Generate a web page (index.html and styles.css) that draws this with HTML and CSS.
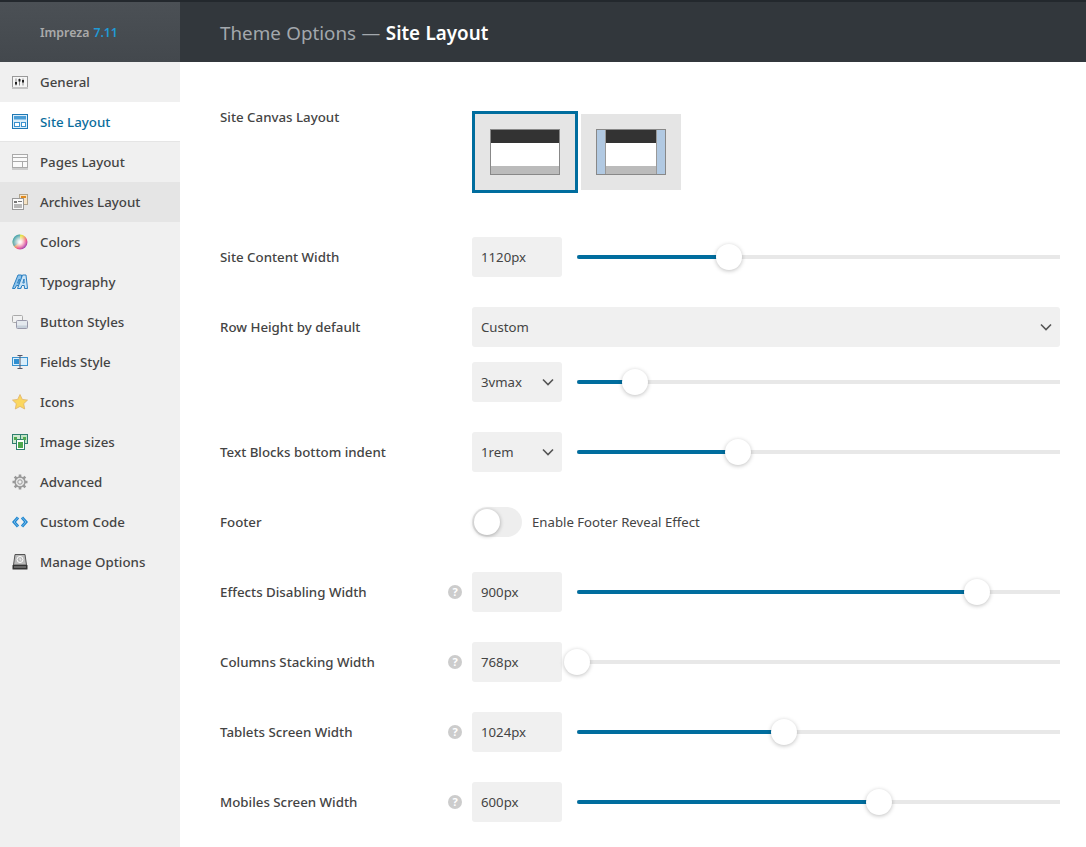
FILE: index.html
```html
<!DOCTYPE html>
<html lang="en">
<head>
<meta charset="utf-8">
<title>Theme Options — Site Layout</title>
<link rel="stylesheet" href="styles.css">
</head>
<body>
<div class="app">
  <aside class="sidebar">
    <div class="brand">Impreza <span class="brand-version">7.11</span></div>
    <nav class="menu">
      <a class="menu-item"><svg class="menu-icon" viewBox="0 0 16 16"><rect x="0.500" y="2.500" width="15" height="11" fill="#f6f6f6" stroke="#999"/><rect x="0" y="13" width="16" height="2" fill="#c4c4c4"/><path d="M4 4.500v7M7.500 4.500v7M11 4.500v7" stroke="#888"/><path d="M3 8h2v2.500H3zM6.500 5h2v2.500h-2zM10 6h2v2.500h-2z" fill="#222"/></svg>General</a>
      <a class="menu-item is-active"><svg class="menu-icon" viewBox="0 0 16 16"><rect x="0.500" y="0.500" width="15" height="14" fill="#dcedf9" stroke="#1f78b4"/><rect x="2" y="2" width="12" height="3.500" fill="#4a9dd6"/><rect x="2.500" y="8.500" width="5" height="4" fill="#fff" stroke="#3b93cf"/><rect x="9.500" y="8.500" width="4" height="4" fill="#fff" stroke="#3b93cf"/></svg>Site Layout</a>
      <a class="menu-item"><svg class="menu-icon" viewBox="0 0 16 16"><rect x="0.500" y="0.500" width="15" height="13" fill="#fafafa" stroke="#aaa"/><path d="M1 3.500h14M1 7.500h14M10.500 7.500v6" stroke="#aaa"/><rect x="0" y="14" width="16" height="2" fill="#ccc"/></svg>Pages Layout</a>
      <a class="menu-item is-hover"><svg class="menu-icon" viewBox="0 0 16 16"><rect x="7.500" y="0.500" width="8" height="10" fill="#f6e3c5" stroke="#b0a48c"/><path d="M9 3h5" stroke="#e08a1e" stroke-width="2"/><rect x="0.500" y="4.500" width="11" height="11" fill="#fafafa" stroke="#999"/><path d="M2 7h3v2H2z" fill="#777"/><path d="M6 7.500h4M2 11h8M2 13h8" stroke="#777"/></svg>Archives Layout</a>
      <a class="menu-item"><svg class="menu-icon" viewBox="0 0 16 16"><defs><linearGradient id="wheel" x1="0" y1="0" x2="1" y2="1"><stop offset="0" stop-color="#33c06a"/><stop offset="0.350" stop-color="#e8e640"/><stop offset="0.650" stop-color="#f0508a"/><stop offset="1" stop-color="#6a3fd8"/></linearGradient><radialGradient id="wheel-core"><stop offset="0" stop-color="#fff"/><stop offset="0.250" stop-color="#fff" stop-opacity="0.850"/><stop offset="1" stop-color="#fff" stop-opacity="0"/></radialGradient></defs><circle cx="8" cy="8" r="7.500" fill="url(#wheel)"/><path d="M8 0.500A7.500 7.500 0 0 0 2 12.500L8 8z" fill="#2b8fe0" opacity="0.650"/><circle cx="8" cy="8" r="7" fill="url(#wheel-core)"/></svg>Colors</a>
      <a class="menu-item"><svg class="menu-icon" viewBox="0 0 16 16"><path d="M0.500 14.500 6 1h3.500l-.500 13.500H6.500l.2-3H4.500l-1.500 3zM5.500 9h1.500l.3-4z" fill="#8fc4ec" stroke="#2a7fc0"/><path d="M5.500 14.500 10.500 1H14l1.500 13.500H12.500l-.2-3H10l-1.500 3zM10.800 9h1.400l-.2-4z" fill="#cbe4f7" stroke="#2a7fc0"/></svg>Typography</a>
      <a class="menu-item"><svg class="menu-icon" viewBox="0 0 16 16"><rect x="0.500" y="1.500" width="10" height="7" rx="1" fill="#f2f2f2" stroke="#aaa"/><rect x="4.500" y="6.500" width="11" height="8" rx="1" fill="#e4e9ee" stroke="#99a"/><rect x="5" y="11.500" width="10" height="2.500" fill="#c6d0da"/></svg>Button Styles</a>
      <a class="menu-item"><svg class="menu-icon" viewBox="0 0 16 16"><rect x="0.500" y="3.500" width="15" height="8" fill="#d9eefb" stroke="#3b93cf"/><rect x="2" y="5" width="5" height="5" fill="#2f8fd0"/><path d="M5.500 1.500h5M8 1.500v13M5.500 14.500h5" stroke="#556" fill="none"/></svg>Fields Style</a>
      <a class="menu-item"><svg class="menu-icon" viewBox="0 0 16 16"><path d="M8 0.500l2.300 4.900 5.200.700-3.800 3.600 1 5.300L8 12.400 3.300 15l1-5.300L.5 6.100l5.200-.7z" fill="#fbd75f" stroke="#dfb36a" stroke-width="0.800"/></svg>Icons</a>
      <a class="menu-item"><svg class="menu-icon" viewBox="0 0 16 16"><rect x="0.500" y="0.500" width="9" height="9" fill="#cfe9d2" stroke="#2f7f6f"/><rect x="8.500" y="0.500" width="7" height="9" fill="#bfe3c4" stroke="#2f7f6f"/><rect x="4.500" y="5.500" width="8" height="10" fill="#fff" stroke="#2f7f6f"/><path d="M6 8h5v6H6z" fill="#4da84f"/><path d="M2 3h3v3H2zM11 3h3v3h-3z" fill="#4da84f"/></svg>Image sizes</a>
      <a class="menu-item"><svg class="menu-icon" viewBox="0 0 16 16"><circle cx="8" cy="8" r="5" fill="#e4e4e4" stroke="#999" stroke-width="1.400"/><path d="M8 .5v3M8 12.500v3M.5 8h3M12.500 8h3M2.700 2.700l2.100 2.100M11.200 11.200l2.100 2.100M13.300 2.700l-2.100 2.100M4.800 11.200l-2.100 2.100" stroke="#999" stroke-width="2.600"/><circle cx="8" cy="8" r="2.200" fill="#f0f0f0" stroke="#999"/></svg>Advanced</a>
      <a class="menu-item"><svg class="menu-icon" viewBox="0 0 16 16"><path d="M6 3.500 2 8l4 4.500M10 3.500 14 8l-4 4.500" fill="none" stroke="#1f86cf" stroke-width="3"/><path d="M6 3.500 2 8l4 4.500M10 3.500 14 8l-4 4.500" fill="none" stroke="#8cc8f0" stroke-width="0.800"/></svg>Custom Code</a>
      <a class="menu-item"><svg class="menu-icon" viewBox="0 0 16 16"><path d="M3 .5h10l1.500 10.500h-13z" fill="#b9b9b9" stroke="#555"/><circle cx="8" cy="5.500" r="3" fill="none" stroke="#fff"/><path d="M8 4v2h1.500" fill="none" stroke="#fff" stroke-width="0.800"/><rect x="0.500" y="11" width="15" height="4.500" rx="0.500" fill="#333"/><rect x="2" y="12.500" width="12" height="1" fill="#999"/></svg>Manage Options</a>
    </nav>
  </aside>

  <div class="content">
    <header class="page-header">
      <h1 class="page-title">Theme Options — <strong class="page-title-strong">Site Layout</strong></h1>
    </header>
    <main class="form">
      <section class="row row-canvas">
        <div class="label">Site Canvas Layout</div>
        <div class="options">
          <div class="option is-selected">
            <div class="preview"><div class="preview-main"><div class="preview-head"></div><div class="preview-body"></div><div class="preview-foot"></div></div></div>
          </div>
          <div class="option">
            <div class="preview preview-boxed"><div class="preview-side"></div><div class="preview-main"><div class="preview-head"></div><div class="preview-body"></div><div class="preview-foot"></div></div><div class="preview-side"></div></div>
          </div>
        </div>
      </section>

      <section class="row">
        <div class="label">Site Content Width</div>
        <div class="control">
          <div class="field">1120px</div>
          <div class="slider"><div class="slider-fill" style="width:31.5%"><span class="slider-thumb"></span></div></div>
        </div>
      </section>

      <section class="row">
        <div class="label">Row Height by default</div>
        <div class="control-stack">
          <div class="control">
            <div class="field field-select field-wide">Custom<svg class="chevron" viewBox="0 0 12 8"><path d="M1 1.500l5 5 5-5" fill="none" stroke="#555" stroke-width="1.600"/></svg></div>
          </div>
          <div class="control">
            <div class="field field-select">3vmax<svg class="chevron" viewBox="0 0 12 8"><path d="M1 1.500l5 5 5-5" fill="none" stroke="#555" stroke-width="1.600"/></svg></div>
            <div class="slider"><div class="slider-fill" style="width:12%"><span class="slider-thumb"></span></div></div>
          </div>
        </div>
      </section>

      <section class="row">
        <div class="label">Text Blocks bottom indent</div>
        <div class="control">
          <div class="field field-select">1rem<svg class="chevron" viewBox="0 0 12 8"><path d="M1 1.500l5 5 5-5" fill="none" stroke="#555" stroke-width="1.600"/></svg></div>
          <div class="slider"><div class="slider-fill" style="width:33.3%"><span class="slider-thumb"></span></div></div>
        </div>
      </section>

      <section class="row">
        <div class="label">Footer</div>
        <div class="control">
          <span class="toggle"><span class="toggle-knob"></span></span>
          <span class="toggle-text">Enable Footer Reveal Effect</span>
        </div>
      </section>

      <section class="row">
        <div class="label">Effects Disabling Width<span class="help">?</span></div>
        <div class="control">
          <div class="field">900px</div>
          <div class="slider"><div class="slider-fill" style="width:82.8%"><span class="slider-thumb"></span></div></div>
        </div>
      </section>

      <section class="row">
        <div class="label">Columns Stacking Width<span class="help">?</span></div>
        <div class="control">
          <div class="field">768px</div>
          <div class="slider"><div class="slider-fill" style="width:0"><span class="slider-thumb"></span></div></div>
        </div>
      </section>

      <section class="row">
        <div class="label">Tablets Screen Width<span class="help">?</span></div>
        <div class="control">
          <div class="field">1024px</div>
          <div class="slider"><div class="slider-fill" style="width:42.9%"><span class="slider-thumb"></span></div></div>
        </div>
      </section>

      <section class="row">
        <div class="label">Mobiles Screen Width<span class="help">?</span></div>
        <div class="control">
          <div class="field">600px</div>
          <div class="slider"><div class="slider-fill" style="width:62.6%"><span class="slider-thumb"></span></div></div>
        </div>
      </section>
    </main>
  </div>
</div>
</body>
</html>
```
FILE: styles.css
```css
* { box-sizing: border-box; }
html, body { margin: 0; height: 100%; overflow: hidden; }
body {
  font-family: "Noto Sans", "Open Sans", "Liberation Sans", sans-serif;
  font-size: 13.2px;
  color: #444;
  background: #fff;
}
.app { display: flex; height: 847px; }

.sidebar { width: 180px; flex: none; background: #f0f0f0; }
.brand {
  height: 62px;
  padding-left: 40px;
  display: flex;
  align-items: center;
  gap: 4px;
  font-size: 12.3px;
  font-weight: 600;
  color: #aaa;
  border-top: 2px solid #23282d;
  background: linear-gradient(#4b5055, #43484d);
}
.brand-version { color: #1f9ad6; }
.menu { display: flex; flex-direction: column; }
.menu-item {
  height: 40px;
  display: flex;
  align-items: center;
  gap: 12px;
  padding: 0 0 1px 12px;
  font-size: 13.3px;
  font-weight: 500;
  color: #444;
}
.menu-icon { width: 16px; height: 16px; flex: none; }
.menu-item.is-active { background: #fff; color: #0a6d9c; box-shadow: inset 0 -1px #e5e5e5; }
.menu-item.is-hover { background: #e5e5e5; }

.content { flex: 1; min-width: 0; display: flex; flex-direction: column; }
.page-header {
  height: 62px;
  flex: none;
  display: flex;
  align-items: center;
  padding: 1px 0 0 40px;
  background: #32373c;
  border-top: 2px solid #23282d;
}
.page-title { margin: 0; font-size: 18.8px; font-weight: 400; color: #a3a8ad; word-spacing: 0.6px; }
.page-title-strong { font-weight: 600; color: #fff; }

.form {
  display: flex;
  flex-direction: column;
  gap: 30px;
  padding: 35px 26px 0 40px;
}
.row { display: flex; align-items: flex-start; }
.label {
  width: 252px;
  flex: none;
  height: 40px;
  padding: 0 10px 1px 0;
  display: flex;
  align-items: center;
  justify-content: space-between;
  font-size: 13.3px;
  font-weight: 500;
  color: #444;
}
.help {
  width: 14px;
  height: 14px;
  margin-top: 1px;
  border-radius: 50%;
  background: #ccc;
  color: #fff;
  font-size: 11px;
  font-weight: 700;
  line-height: 14px;
  text-align: center;
}
.options { display: flex; margin: 14px 0; }
.option {
  width: 106px;
  height: 82px;
  border: 3px solid transparent;
  background: #e5e5e5;
  background-clip: padding-box;
  display: flex;
  align-items: center;
  justify-content: center;
}
.option.is-selected { border-color: #006d9e; }
.preview {
  width: 70px;
  height: 46px;
  border: 1px solid #888;
  display: flex;
  background: #fff;
}
.preview-main { flex: 1; display: flex; flex-direction: column; }
.preview-head { height: 13px; background: #333; }
.preview-body { flex: 1; background: #fff; }
.preview-foot { height: 8px; background: #bbb; }
.preview-side { width: 8px; background: #b1c9e2; }
.preview-boxed .preview-side:first-child { border-right: 1px solid #999; width: 9px; }
.preview-boxed .preview-side:last-child { border-left: 1px solid #999; width: 9px; }

.control { display: flex; align-items: center; flex: 1; min-width: 0; min-height: 40px; }
.control-stack { flex: 1; min-width: 0; display: flex; flex-direction: column; gap: 15px; }
.field {
  width: 90px;
  height: 40px;
  flex: none;
  padding: 0 8px 1px 9px;
  display: flex;
  align-items: center;
  justify-content: space-between;
  background: #f0f0f0;
  border-radius: 3px;
  font-size: 13.2px;
  color: #444;
}
.field-wide { width: 100%; flex: 1; }
.chevron { width: 12px; height: 8px; flex: none; margin-top: 1px; }
.slider {
  position: relative;
  flex: 1;
  margin-left: 15px;
  height: 4px;
  background: #e8e8e8;
}
.slider-fill {
  position: relative;
  height: 100%;
  background: #006d9e;
  border-radius: 2px;
}
.slider-thumb {
  position: absolute;
  right: -13px;
  top: -11px;
  width: 26px;
  height: 26px;
  border-radius: 50%;
  background: #fff;
  box-shadow: 0 1px 4px rgba(0, 0, 0, 0.25);
}
.toggle {
  width: 50px;
  height: 30px;
  flex: none;
  padding: 2px;
  border-radius: 15px;
  background: #eee;
}
.toggle-knob {
  display: block;
  width: 26px;
  height: 26px;
  border-radius: 50%;
  background: #fff;
  box-shadow: 0 1px 4px rgba(0, 0, 0, 0.3);
}
.toggle-text { margin-left: 10px; font-size: 13.2px; color: #444; }
```
